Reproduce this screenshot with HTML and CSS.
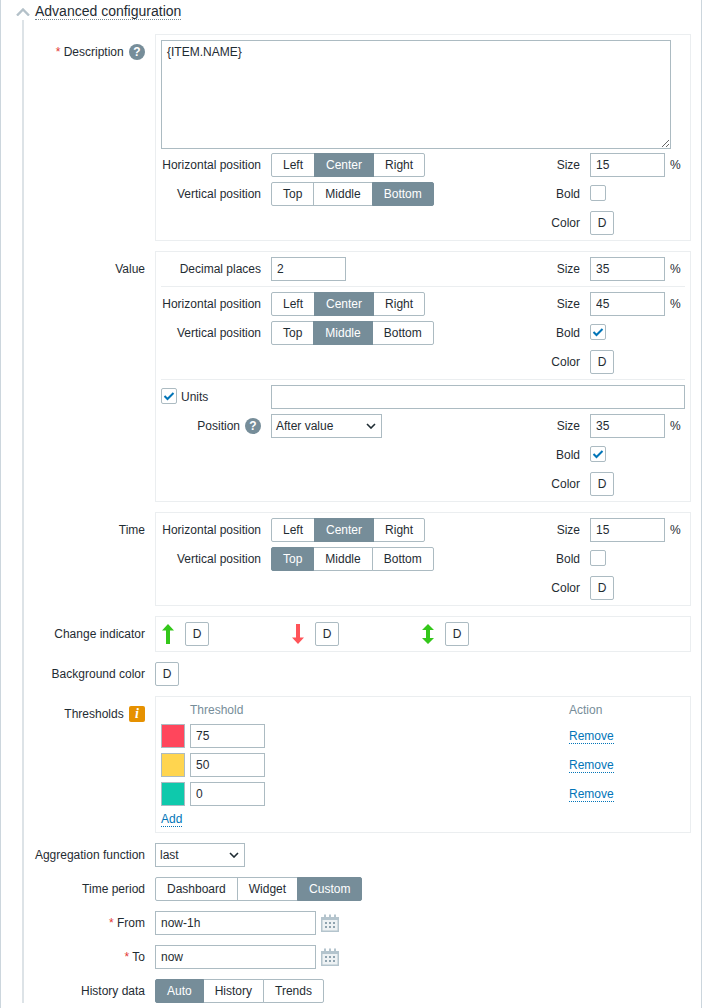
FILE: index.html
```html
<!DOCTYPE html>
<html lang="en">
<head>
<meta charset="utf-8">
<title>Advanced configuration</title>
<link rel="stylesheet" href="styles.css">
</head>
<body>
<div class="page">
  <div class="section-head">
    <svg class="chevron" width="14" height="8" viewBox="0 0 14 8"><polyline points="1,7.5 7,1.5 13,7.5" fill="none" stroke="#b4c1c9" stroke-width="2.4"/></svg>
    <span class="section-title">Advanced configuration</span>
  </div>
  <div class="form">
    <div class="label boxed"><span class="req">*</span> Description <span class="help">?</span></div>
    <div class="box">
      <textarea class="area" spellcheck="false">{ITEM.NAME}</textarea>
      <div class="rows">
        <div class="row">
          <span class="cell-label">Horizontal position</span>
          <div class="radio"><span class="opt">Left</span><span class="opt on">Center</span><span class="opt">Right</span></div>
          <span class="cell-label">Size</span>
          <div class="size"><input class="input w75" value="15"><span>%</span></div>
        </div>
        <div class="row">
          <span class="cell-label">Vertical position</span>
          <div class="radio"><span class="opt">Top</span><span class="opt">Middle</span><span class="opt on">Bottom</span></div>
          <span class="cell-label">Bold</span>
          <div><span class="check"></span></div>
        </div>
        <div class="row">
          <span></span><span></span>
          <span class="cell-label">Color</span>
          <div><span class="swatch-btn">D</span></div>
        </div>
      </div>
    </div>

    <div class="label boxed">Value</div>
    <div class="box">
      <div class="rows">
        <div class="row">
          <span class="cell-label">Decimal places</span>
          <div><input class="input w75" value="2"></div>
          <span class="cell-label">Size</span>
          <div class="size"><input class="input w75" value="35"><span>%</span></div>
        </div>
      </div>
      <div class="rule"></div>
      <div class="rows">
        <div class="row">
          <span class="cell-label">Horizontal position</span>
          <div class="radio"><span class="opt">Left</span><span class="opt on">Center</span><span class="opt">Right</span></div>
          <span class="cell-label">Size</span>
          <div class="size"><input class="input w75" value="45"><span>%</span></div>
        </div>
        <div class="row">
          <span class="cell-label">Vertical position</span>
          <div class="radio"><span class="opt">Top</span><span class="opt on">Middle</span><span class="opt">Bottom</span></div>
          <span class="cell-label">Bold</span>
          <div><span class="check"><svg width="14" height="14" viewBox="0 0 14 14"><polyline points="2.5,7 5.5,10 11.5,4" fill="none" stroke="#0275b8" stroke-width="2"/></svg></span></div>
        </div>
        <div class="row">
          <span></span><span></span>
          <span class="cell-label">Color</span>
          <div><span class="swatch-btn">D</span></div>
        </div>
      </div>
      <div class="rule"></div>
      <div class="rows">
        <div class="row">
          <div class="units"><span class="check"><svg width="14" height="14" viewBox="0 0 14 14"><polyline points="2.5,7 5.5,10 11.5,4" fill="none" stroke="#0275b8" stroke-width="2"/></svg></span><span>Units</span></div>
          <input class="input wide" value="">
        </div>
        <div class="row">
          <span class="cell-label">Position <span class="help">?</span></span>
          <div><div class="select w111"><span>After value</span><svg width="10" height="6" viewBox="0 0 10 6"><polyline points="1,1 5,5 9,1" fill="none" stroke="#1f2c33" stroke-width="1.6"/></svg></div></div>
          <span class="cell-label">Size</span>
          <div class="size"><input class="input w75" value="35"><span>%</span></div>
        </div>
        <div class="row">
          <span></span><span></span>
          <span class="cell-label">Bold</span>
          <div><span class="check"><svg width="14" height="14" viewBox="0 0 14 14"><polyline points="2.5,7 5.5,10 11.5,4" fill="none" stroke="#0275b8" stroke-width="2"/></svg></span></div>
        </div>
        <div class="row">
          <span></span><span></span>
          <span class="cell-label">Color</span>
          <div><span class="swatch-btn">D</span></div>
        </div>
      </div>
    </div>

    <div class="label boxed">Time</div>
    <div class="box">
      <div class="rows">
        <div class="row">
          <span class="cell-label">Horizontal position</span>
          <div class="radio"><span class="opt">Left</span><span class="opt on">Center</span><span class="opt">Right</span></div>
          <span class="cell-label">Size</span>
          <div class="size"><input class="input w75" value="15"><span>%</span></div>
        </div>
        <div class="row">
          <span class="cell-label">Vertical position</span>
          <div class="radio"><span class="opt on">Top</span><span class="opt">Middle</span><span class="opt">Bottom</span></div>
          <span class="cell-label">Bold</span>
          <div><span class="check"></span></div>
        </div>
        <div class="row">
          <span></span><span></span>
          <span class="cell-label">Color</span>
          <div><span class="swatch-btn">D</span></div>
        </div>
      </div>
    </div>

    <div class="label boxed">Change indicator</div>
    <div class="box indicators">
      <div class="indicator">
        <svg width="12" height="20" viewBox="0 0 12 20"><path d="M6 0 L12 6.5 H8 V20 H4 V6.5 H0 Z" fill="#34c71a"/></svg>
        <span class="swatch-btn">D</span>
      </div>
      <div class="indicator">
        <svg width="12" height="20" viewBox="0 0 12 20"><path d="M4 0 H8 V13.5 H12 L6 20 L0 13.5 H4 Z" fill="#ff5459"/></svg>
        <span class="swatch-btn">D</span>
      </div>
      <div class="indicator">
        <svg width="12" height="20" viewBox="0 0 12 20"><path d="M6 0 L12 6 H8 V14 H12 L6 20 L0 14 H4 V6 H0 Z" fill="#34c71a"/></svg>
        <span class="swatch-btn">D</span>
      </div>
    </div>

    <div class="label">Background color</div>
    <div><span class="swatch-btn">D</span></div>

    <div class="label boxed">Thresholds <span class="info">i</span></div>
    <div class="box thresholds">
      <span></span><span class="th">Threshold</span><span></span><span class="th">Action</span>
      <span class="color red"></span><input class="input w75" value="75"><span></span><span><a class="link">Remove</a></span>
      <span class="color yellow"></span><input class="input w75" value="50"><span></span><span><a class="link">Remove</a></span>
      <span class="color teal"></span><input class="input w75" value="0"><span></span><span><a class="link">Remove</a></span>
      <span class="add"><a class="link">Add</a></span>
    </div>

    <div class="label">Aggregation function</div>
    <div><div class="select w90"><span>last</span><svg width="10" height="6" viewBox="0 0 10 6"><polyline points="1,1 5,5 9,1" fill="none" stroke="#1f2c33" stroke-width="1.6"/></svg></div></div>

    <div class="label">Time period</div>
    <div class="radio"><span class="opt">Dashboard</span><span class="opt">Widget</span><span class="opt on">Custom</span></div>

    <div class="label"><span class="req">*</span> From</div>
    <div class="date">
      <input class="input w161" value="now-1h">
      <svg width="18" height="18" viewBox="0 0 18 18"><path d="M0 3 H3 V0.5 H5 V3 H8 V0.5 H10 V3 H13 V0.5 H15 V3 H18 V18 H0 Z" fill="#b4c4cd"/><rect x="1.5" y="6" width="15" height="10.5" fill="#eef2f4"/><g fill="#8fa3af"><rect x="4" y="8" width="2" height="2"/><rect x="8" y="8" width="2" height="2"/><rect x="12" y="8" width="2" height="2"/><rect x="4" y="12" width="2" height="2"/><rect x="8" y="12" width="2" height="2"/><rect x="12" y="12" width="2" height="2"/></g></svg>
    </div>

    <div class="label"><span class="req">*</span> To</div>
    <div class="date">
      <input class="input w161" value="now">
      <svg width="18" height="18" viewBox="0 0 18 18"><path d="M0 3 H3 V0.5 H5 V3 H8 V0.5 H10 V3 H13 V0.5 H15 V3 H18 V18 H0 Z" fill="#b4c4cd"/><rect x="1.5" y="6" width="15" height="10.5" fill="#eef2f4"/><g fill="#8fa3af"><rect x="4" y="8" width="2" height="2"/><rect x="8" y="8" width="2" height="2"/><rect x="12" y="8" width="2" height="2"/><rect x="4" y="12" width="2" height="2"/><rect x="8" y="12" width="2" height="2"/><rect x="12" y="12" width="2" height="2"/></g></svg>
    </div>

    <div class="label">History data</div>
    <div class="radio"><span class="opt on">Auto</span><span class="opt">History</span><span class="opt">Trends</span></div>
  </div>
</div>
</body>
</html>
```

FILE: styles.css
```css
* { box-sizing: border-box; }
html, body { margin: 0; padding: 0; background: #fff; overflow: hidden; }
body { font-family: "Liberation Sans", Arial, sans-serif; font-size: 12px; color: #1f2c33; }
.page { width: 702px; height: 1008px; border-left: 1px solid #ccd6dd; border-right: 1px solid #ccd6dd; overflow: hidden; }

.section-head { display: flex; align-items: flex-start; height: 20px; padding-left: 15px; }
.chevron { margin-top: 8px; margin-right: 5px; flex: none; }
.section-title { font-size: 14px; line-height: 19px; height: 18px; margin-top: 2px; border-bottom: 1px dotted #76868f; }

.form { margin-left: 21px; border-left: 2px solid #dde3e7; padding-top: 14px; display: grid; grid-template-columns: 121px 536px; column-gap: 10px; row-gap: 10px; align-items: start; }

.label { height: 24px; line-height: 24px; text-align: right; white-space: nowrap; }
.label.boxed { margin-top: 6px; }
.label .help, .label .info { margin-left: 2px; vertical-align: top; margin-top: 4px; }
.req { color: #e33734; }

.help { display: inline-flex; width: 16px; height: 16px; border-radius: 50%; background: #768d99; color: #fff; font-weight: bold; font-size: 12px; line-height: 16px; justify-content: center; }
.info { display: inline-flex; width: 16px; height: 16px; border-radius: 2px; background: #e69100; color: #fff; font-family: "Liberation Serif", serif; font-style: italic; font-weight: bold; font-size: 14px; line-height: 16px; justify-content: center; }

.box { border: 1px solid #ebeef0; padding: 5px; }
.area { display: block; width: 510px; height: 109px; margin: 0 0 4px; padding: 4px 5px; border: 1px solid #acbbc2; border-radius: 0; font: inherit; color: inherit; outline: none; }

.rows { display: flex; flex-direction: column; gap: 5px; }
.row { display: grid; grid-template-columns: 100px 229px 70px 95px; column-gap: 10px; height: 24px; align-items: center; }
.cell-label { display: flex; justify-content: flex-end; align-items: center; gap: 5px; white-space: nowrap; }
.rule { height: 1px; background: #ebeef0; margin: 5px 0; }

.input { height: 24px; padding: 0 5px; border: 1px solid #acbbc2; border-radius: 0; font: inherit; color: inherit; background: #fff; outline: none; display: block; }
.w75 { width: 75px; }
.w161 { width: 161px; }
.wide { grid-column: 2 / span 3; width: 414px; }
.size { display: flex; align-items: center; gap: 5px; }

.radio { display: flex; height: 24px; }
.opt { height: 24px; line-height: 22px; padding: 0 11px; border: 1px solid #acbbc2; margin-left: -1px; background: #fff; white-space: nowrap; }
.opt:first-child { margin-left: 0; border-radius: 2px 0 0 2px; }
.opt:last-child { border-radius: 0 2px 2px 0; }
.opt.on { background: #768d99; border-color: #768d99; color: #fff; position: relative; }

.check { display: flex; width: 16px; height: 16px; margin-top: -2px; border: 1px solid #acbbc2; border-radius: 2px; background: #fff; }
.units { display: flex; align-items: center; gap: 4px; }

.swatch-btn { display: block; width: 24px; height: 24px; line-height: 22px; text-align: center; border: 1px solid #acbbc2; border-radius: 2px; background: #fff; }

.select { display: flex; height: 24px; align-items: center; justify-content: space-between; padding: 0 5px 0 4px; border: 1px solid #acbbc2; background: #fff; }
.w111 { width: 111px; }
.w90 { width: 90px; }

.indicators { display: flex; }
.indicator { display: flex; align-items: center; gap: 11px; width: 130px; padding-left: 1px; }

.thresholds { display: grid; grid-template-columns: 24px 75px 294px 1fr; column-gap: 5px; row-gap: 5px; align-items: center; }
.th { color: #768d99; line-height: 17px; }
.color { display: block; width: 24px; height: 24px; border: 1px solid #acbbc2; }
.red { background: #ff465c; }
.yellow { background: #ffd54f; }
.teal { background: #0ec9ac; }
.add { grid-column: 1 / -1; height: 16px; padding-top: 1px; line-height: 14px; }
.link { display: inline-block; color: #0275b8; line-height: 14px; border-bottom: 1px dotted #0275b8; }

.date { display: flex; align-items: center; gap: 5px; height: 24px; }
```
